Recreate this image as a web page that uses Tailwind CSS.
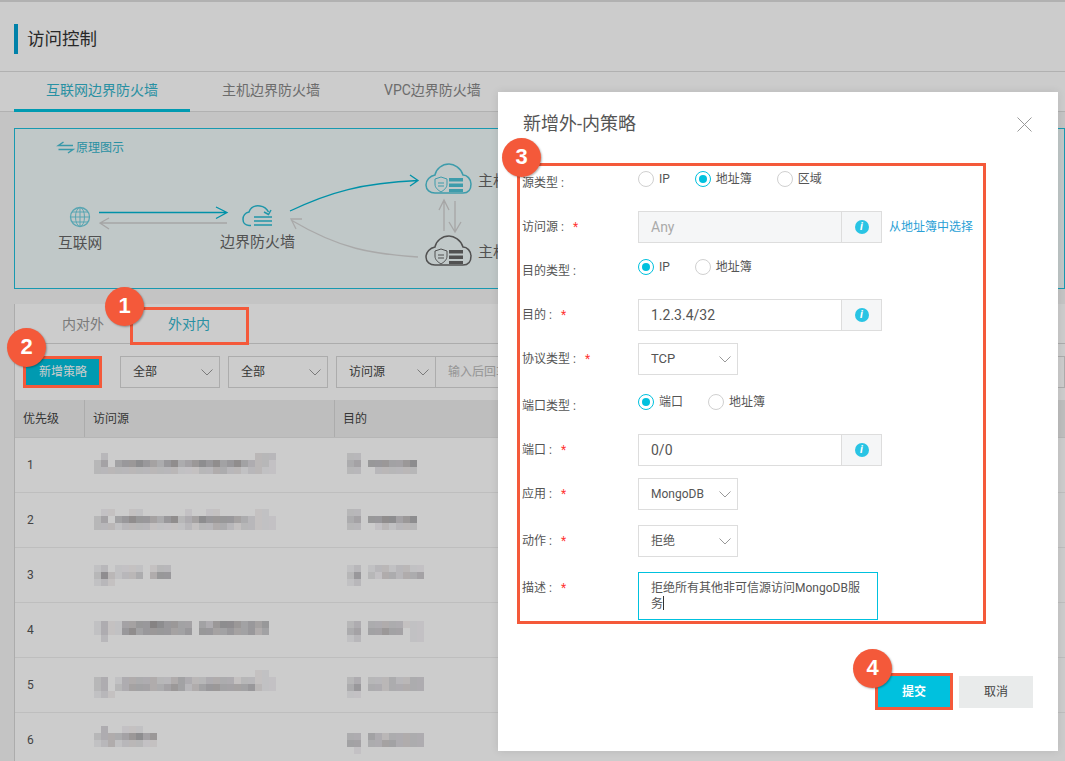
<!DOCTYPE html>
<html lang="zh-CN">
<head>
<meta charset="UTF-8">
<title>访问控制</title>
<script src="https://cdn.jsdelivr.net/npm/@tailwindcss/browser@4"></script>
</head>
<body class="font-['Roboto','Noto_Sans_CJK_SC',sans-serif]">
<div class="relative w-[1065px] h-[761px] overflow-hidden bg-[#f5f5f5]">

  <!-- page under the dialog -->
  <div class="flex flex-col h-full">
    <div class="h-[72px] shrink-0 bg-white border-t-2 border-b border-[#dedede] flex items-start pl-[14px] pt-[22px]">
      <div class="w-[4px] h-[30px] bg-[#00a2d4]"></div>
      <div class="ml-[9px] text-[17.5px] leading-[30px] text-[#333]">访问控制</div>
    </div>
    <div class="h-[40px] shrink-0 bg-white border-b border-[#dedede] pl-[14px] flex text-[14px] text-[#888]">
      <div class="px-8 h-[40px] leading-[36px] text-[#33b5cc] border-b-[3px] border-[#00c1de]">互联网边界防火墙</div>
      <div class="px-8 leading-[36px]">主机边界防火墙</div>
      <div class="px-8 leading-[36px]">VPC边界防火墙</div>
    </div>

    <!-- diagram banner -->
    <div class="relative ml-[14px] mt-[16px] h-[161px] shrink-0 border border-[#1fc0dc] bg-[#f0fafa]">
      <svg class="absolute left-0 top-0" width="520" height="159" viewBox="15 129 520 159" fill="none">
        <path d="M73 145.500H58.500L63.500 142M58.500 149.500H73L68 153" stroke="#47bfd4" stroke-width="1.5"/>
        <circle cx="80" cy="217" r="9.5" stroke="#6fcfdf" stroke-width="1.3"/>
        <ellipse cx="80" cy="217" rx="4.5" ry="9.5" stroke="#6fcfdf"/>
        <path d="M70.500 217h19M72 212h16M72 222h16M80 207.500v19" stroke="#6fcfdf"/>
        <path d="M99 212.500H227M216 207l11 5.500-11 6" stroke="#00b6d2" stroke-width="1.300"/>
        <path d="M227 223H100M109 218l-9 5 9 6" stroke="#cfcfcf" stroke-width="1.300"/>
        <path d="M251 225.500h-2c-8 0-8-12-0-13.500 2-6 7-6.500 11-6 4 .5 7 3 8.500 6M264 212l4.500 2.500 2.500-4.500" stroke="#28bcd4" stroke-width="1.500"/>
        <path d="M254 217h18M254 221h18M254 225h18" stroke="#28bcd4" stroke-width="1.700"/>
        <path d="M290 211C330 192 362 183 418 180.500M410 175l8 5.500-8 5.500" stroke="#00b6d2" stroke-width="1.300"/>
        <path d="M418 257C372 254 340 249 291 220M302 219l-11 0 5 10" stroke="#d4d4d4" stroke-width="1.300"/>
        <path d="M435 193H463C470 193 471 187 471 184C471 179 467 175 463 175C461 168 454 164 449 164C442 164 436 169 435 175C430 176 426 180 426 185C426 190 430 193 435 193Z" stroke="#4dc3d6" stroke-width="1.500"/>
        <path d="M441 177l6 2v5c0 4-3 6-6 8-3-2-6-4-6-8v-5zM438 183h6M438 186h6" stroke="#4dc3d6"/>
        <path d="M449 178h14v3.500h-14zM449 183.500h14v3.500h-14zM449 189h14v3h-14z" fill="#4dc3d6"/>
        <path d="M435 265H463C470 265 471 259 471 256C471 251 467 247 463 247C461 240 454 236 449 236C442 236 436 241 435 247C430 248 426 252 426 257C426 262 430 265 435 265Z" stroke="#666" stroke-width="1.500"/>
        <path d="M441 249l6 2v5c0 4-3 6-6 8-3-2-6-4-6-8v-5zM438 255h6M438 258h6" stroke="#666"/>
        <path d="M449 250h14v3.500h-14zM449 255.500h14v3.500h-14zM449 261h14v3h-14z" fill="#666"/>
        <path d="M444 231V200M439 210l5-10 5 10M455 201v31M449 222l6 10 6-10" stroke="#d0d0d0" stroke-width="1.300"/>
      </svg>
      <div class="absolute left-[61px] top-[11px] text-[12px] leading-[16px] text-[#33b5cc]">原理图示</div>
      <div class="absolute left-[43px] top-[104px] text-[14.700px] leading-[20px] text-[#666]">互联网</div>
      <div class="absolute left-[205px] top-[103px] text-[15px] leading-[20px] text-[#666]">边界防火墙</div>
      <div class="absolute left-[463px] top-[42px] text-[15px] leading-[20px] text-[#666]">主机</div>
      <div class="absolute left-[463px] top-[113px] text-[15px] leading-[20px] text-[#666]">主机</div>
    </div>

    <!-- rules table -->
    <div class="ml-[14px] mt-[15px] flex-1 bg-white border-l border-[#d8d8d8]">
      <div class="h-[40px] pl-[15px] flex border-b border-[#d8d8d8] text-[14px] text-[#999]">
        <div class="w-[106px] text-center leading-[40px]">内对外</div>
        <div class="w-[106px] h-[40px] text-center leading-[40px] text-[#33b5cc] border-b-2 border-[#00c1de]">外对内</div>
      </div>
      <div class="mt-[12px] h-[32px] pl-[11px] flex items-center text-[12px] text-[#444]">
        <div class="w-[74px] h-[28px] bg-[#00c1de] text-white text-center leading-[28px]">新增策略</div>
        <div class="ml-[20px] w-[100px] h-[32px] border border-[#d8d8d8] pl-[12px] pr-[6px] flex items-center justify-between">全部
          <svg width="12" height="7" viewBox="0 0 12 7" fill="none"><path d="M.5.500 6 6l5.500-5.500" stroke="#999"/></svg>
        </div>
        <div class="ml-[8px] w-[100px] h-[32px] border border-[#d8d8d8] pl-[12px] pr-[6px] flex items-center justify-between">全部
          <svg width="12" height="7" viewBox="0 0 12 7" fill="none"><path d="M.5.500 6 6l5.500-5.500" stroke="#999"/></svg>
        </div>
        <div class="ml-[8px] w-[100px] h-[32px] border border-[#d8d8d8] pl-[12px] pr-[6px] flex items-center justify-between">访问源
          <svg width="12" height="7" viewBox="0 0 12 7" fill="none"><path d="M.5.500 6 6l5.500-5.500" stroke="#999"/></svg>
        </div>
        <div class="flex-1 h-[32px] border border-l-0 border-[#d8d8d8] pl-[12px] leading-[30px] text-[#bbb]">输入后回车</div>
      </div>
      <div class="mt-[12px] h-[38px] flex bg-[#eeeeee] text-[12px] leading-[38px] text-[#444] border-b border-[#e4e4e4]">
        <div class="w-[70px] pl-[8px] border-r border-[#d8d8d8]">优先级</div>
        <div class="w-[250px] pl-[8px] border-r border-[#d8d8d8]">访问源</div>
        <div class="flex-1 pl-[8px]">目的</div>
      </div>
      <div class="h-[55px] flex text-[12px] text-[#555] border-b border-[#eee]"><div class="w-[70px] pl-[12px] leading-[54px]">1</div><svg data-blur="0" class="w-[250px] h-[54px]"></svg><svg data-blur="1" class="w-[200px] h-[54px]"></svg></div>
      <div class="h-[55px] flex text-[12px] text-[#555] border-b border-[#eee]"><div class="w-[70px] pl-[12px] leading-[54px]">2</div><svg data-blur="2" class="w-[250px] h-[54px]"></svg><svg data-blur="3" class="w-[200px] h-[54px]"></svg></div>
      <div class="h-[55px] flex text-[12px] text-[#555] border-b border-[#eee]"><div class="w-[70px] pl-[12px] leading-[54px]">3</div><svg data-blur="4" class="w-[250px] h-[54px]"></svg><svg data-blur="5" class="w-[200px] h-[54px]"></svg></div>
      <div class="h-[55px] flex text-[12px] text-[#555] border-b border-[#eee]"><div class="w-[70px] pl-[12px] leading-[54px]">4</div><svg data-blur="6" class="w-[250px] h-[54px]"></svg><svg data-blur="7" class="w-[200px] h-[54px]"></svg></div>
      <div class="h-[55px] flex text-[12px] text-[#555] border-b border-[#eee]"><div class="w-[70px] pl-[12px] leading-[54px]">5</div><svg data-blur="8" class="w-[250px] h-[54px]"></svg><svg data-blur="9" class="w-[200px] h-[54px]"></svg></div>
      <div class="h-[55px] flex text-[12px] text-[#555] border-b border-[#eee]"><div class="w-[70px] pl-[12px] leading-[54px]">6</div><svg data-blur="10" class="w-[250px] h-[54px]"></svg><svg data-blur="11" class="w-[200px] h-[54px]"></svg></div>
    </div>
  </div>

  <div class="absolute inset-0 bg-black/20"></div>

  <!-- dialog -->
  <div class="absolute left-[498px] top-[92px] w-[560px] h-[659px] bg-white shadow-[0_0_8px_rgba(0,0,0,0.1)] pl-[24px] pr-[25px]">
    <div class="h-[71px] flex items-start justify-between pt-[21px]">
      <div class="ml-[1px] text-[18px] leading-[22px] text-[#555]">新增外-内策略</div>
      <svg class="mt-[4px] mr-[1px]" width="15" height="15" viewBox="0 0 15 15" fill="none"><path d="M.5.500l14 14M14.500.500l-14 14" stroke="#999"/></svg>
    </div>

    <div class="text-[12px] text-[#555]">
      <div class="h-[32px] flex items-center">
        <div class="w-[116px] pt-[8px]">源类型&nbsp;:</div>
        <div class="flex items-center gap-[25px]">
          <div class="flex items-center gap-[5px]"><span class="w-[16px] h-[16px] rounded-full border border-[#d0d0d0]"></span>IP</div>
          <div class="flex items-center gap-[5px]"><span class="w-[16px] h-[16px] rounded-full border border-[#00c1de] flex items-center justify-center"><span class="w-[8px] h-[8px] rounded-full bg-[#00c1de]"></span></span>地址簿</div>
          <div class="flex items-center gap-[5px]"><span class="w-[16px] h-[16px] rounded-full border border-[#d0d0d0]"></span>区域</div>
        </div>
      </div>
      <div class="mt-[16px] h-[32px] flex items-center">
        <div class="w-[116px]">访问源&nbsp;:<span class="ml-[9px] text-[#f33]">*</span></div>
        <div class="w-[204px] h-[32px] border border-[#ddd] bg-[#f5f6f7] pl-[12px] text-[14px] leading-[30px] text-[#aaa]">Any</div>
        <div class="w-[40px] h-[32px] border border-l-0 border-[#ddd] bg-[#f5f6f7] flex items-center justify-center"><span class="w-[14px] h-[14px] rounded-full bg-[#29c4e4] text-white text-[11px] leading-[14px] font-bold italic text-center">i</span></div>
        <div class="ml-[7px] text-[#2a9fd6]">从地址簿中选择</div>
      </div>
      <div class="mt-[8px] h-[32px] flex items-center">
        <div class="w-[116px] pt-[8px]">目的类型&nbsp;:</div>
        <div class="flex items-center gap-[25px]">
          <div class="flex items-center gap-[5px]"><span class="w-[16px] h-[16px] rounded-full border border-[#00c1de] flex items-center justify-center"><span class="w-[8px] h-[8px] rounded-full bg-[#00c1de]"></span></span>IP</div>
          <div class="flex items-center gap-[5px]"><span class="w-[16px] h-[16px] rounded-full border border-[#d0d0d0]"></span>地址簿</div>
        </div>
      </div>
      <div class="mt-[16px] h-[32px] flex items-center">
        <div class="w-[116px]">目的&nbsp;:<span class="ml-[9px] text-[#f33]">*</span></div>
        <div class="w-[204px] h-[32px] border border-[#ddd] pl-[12px] text-[14px] leading-[30px]">1.2.3.4/32</div>
        <div class="w-[40px] h-[32px] border border-l-0 border-[#ddd] bg-[#f5f6f7] flex items-center justify-center"><span class="w-[14px] h-[14px] rounded-full bg-[#29c4e4] text-white text-[11px] leading-[14px] font-bold italic text-center">i</span></div>
      </div>
      <div class="mt-[12px] h-[32px] flex items-center">
        <div class="w-[116px]">协议类型&nbsp;:<span class="ml-[9px] text-[#f33]">*</span></div>
        <div class="w-[100px] h-[32px] border border-[#ddd] pl-[12px] pr-[6px] flex items-center justify-between text-[13px]">TCP
          <svg width="12" height="7" viewBox="0 0 12 7" fill="none"><path d="M.5.500 6 6l5.500-5.500" stroke="#999"/></svg>
        </div>
      </div>
      <div class="mt-[11px] h-[32px] flex items-center">
        <div class="w-[116px] pt-[8px]">端口类型&nbsp;:</div>
        <div class="flex items-center gap-[25px]">
          <div class="flex items-center gap-[5px]"><span class="w-[16px] h-[16px] rounded-full border border-[#00c1de] flex items-center justify-center"><span class="w-[8px] h-[8px] rounded-full bg-[#00c1de]"></span></span>端口</div>
          <div class="flex items-center gap-[5px]"><span class="w-[16px] h-[16px] rounded-full border border-[#d0d0d0]"></span>地址簿</div>
        </div>
      </div>
      <div class="mt-[16px] h-[32px] flex items-center">
        <div class="w-[116px]">端口&nbsp;:<span class="ml-[9px] text-[#f33]">*</span></div>
        <div class="w-[204px] h-[32px] border border-[#ddd] pl-[12px] text-[14px] leading-[30px]">0/0</div>
        <div class="w-[40px] h-[32px] border border-l-0 border-[#ddd] bg-[#f5f6f7] flex items-center justify-center"><span class="w-[14px] h-[14px] rounded-full bg-[#29c4e4] text-white text-[11px] leading-[14px] font-bold italic text-center">i</span></div>
      </div>
      <div class="mt-[12px] h-[32px] flex items-center">
        <div class="w-[116px]">应用&nbsp;:<span class="ml-[9px] text-[#f33]">*</span></div>
        <div class="w-[100px] h-[32px] border border-[#ddd] pl-[12px] pr-[6px] flex items-center justify-between">MongoDB
          <svg width="12" height="7" viewBox="0 0 12 7" fill="none"><path d="M.5.500 6 6l5.500-5.500" stroke="#999"/></svg>
        </div>
      </div>
      <div class="mt-[15px] h-[32px] flex items-center">
        <div class="w-[116px]">动作&nbsp;:<span class="ml-[9px] text-[#f33]">*</span></div>
        <div class="w-[100px] h-[32px] border border-[#ddd] pl-[12px] pr-[6px] flex items-center justify-between">拒绝
          <svg width="12" height="7" viewBox="0 0 12 7" fill="none"><path d="M.5.500 6 6l5.500-5.500" stroke="#999"/></svg>
        </div>
      </div>
      <div class="mt-[15px] h-[48px] flex items-start">
        <div class="w-[116px] pt-[8px] leading-[16px]">描述&nbsp;:<span class="ml-[9px] text-[#f33]">*</span></div>
        <div class="w-[240px] h-[48px] border border-[#00c1de] pl-[12px] pt-[7px] leading-[16px]">拒绝所有其他非可信源访问MongoDB服<br>务<span class="inline-block w-px h-[14px] bg-[#333] align-[-2px]"></span></div>
      </div>
    </div>

    <div class="mt-[56px] flex justify-end gap-[8px] text-[12px]">
      <div class="w-[74px] h-[32px] bg-[#00c1de] text-white font-bold text-center leading-[32px]">提交</div>
      <div class="w-[74px] h-[32px] bg-[#e9ebeb] text-[#444] text-center leading-[32px]">取消</div>
    </div>
  </div>

  <!-- red step marks -->
  <div class="absolute left-[130px] top-[307px] w-[119px] h-[38px] border-[3px] border-[#f4593a]"></div>
  <div class="absolute left-[23px] top-[356px] w-[79px] h-[32px] border-[3px] border-[#f4593a]"></div>
  <div class="absolute left-[517px] top-[163px] w-[469px] h-[461px] border-[3px] border-[#f4593a]"></div>
  <div class="absolute left-[875px] top-[673px] w-[78px] h-[37px] border-[3px] border-[#f4593a]"></div>
  <div class="absolute left-[105px] top-[287px] w-[39px] h-[39px] rounded-full bg-[#f4593a] shadow-[1px_1px_2px_rgba(0,0,0,0.3)] text-white text-center font-['Liberation_Sans',sans-serif] font-bold text-[22px] leading-[38px]">1</div>
  <div class="absolute left-[7px] top-[328px] w-[39px] h-[39px] rounded-full bg-[#f4593a] shadow-[1px_1px_2px_rgba(0,0,0,0.3)] text-white text-center font-['Liberation_Sans',sans-serif] font-bold text-[22px] leading-[38px]">2</div>
  <div class="absolute left-[502px] top-[138px] w-[39px] h-[39px] rounded-full bg-[#f4593a] shadow-[1px_1px_2px_rgba(0,0,0,0.3)] text-white text-center font-['Liberation_Sans',sans-serif] font-bold text-[22px] leading-[38px]">3</div>
  <div class="absolute left-[853px] top-[649px] w-[39px] h-[39px] rounded-full bg-[#f4593a] shadow-[1px_1px_2px_rgba(0,0,0,0.3)] text-white text-center font-['Liberation_Sans',sans-serif] font-bold text-[22px] leading-[38px]">4</div>
</div>

<script>
  // redacted cells: one string per row of 7px blocks, digit = darkness
  var blurs = [
    [9, 15, ["02000000000000000000000222", "24045565435634565645643221", "22222222222211122332212211"]],
    [12, 15, ["2200000000", "3405554456", "2200222222"]],
    [9, 16, ["01100110000001001100000110", "24045655435623465555432111", "22212222111112122332122111"]],
    [12, 16, ["2200000000", "3405566456", "2200121222"]],
    [9, 17, ["12011110122", "26212230355", "12100000000"]],
    [12, 17, ["12012212211", "25021332334", "12000000000"]],
    [9, 18, ["1311445576554404356654545", "1311564555544505544544534", "0200000000000000000000000"]],
    [12, 18, ["23033333111", "34044544011", "12000000011"]],
    [9, 12, ["00000000000000000000000110", "23013333322343223333122111", "23023444334542345544445211", "12100000000000000000000000"]],
    [12, 12, ["00000000000", "23022232233", "35033233333", "11000000000"]],
    [9, 13, ["030011100", "233345645", "123122211"]],
    [12, 20, ["33043233333", "44033443333", "01000000000"]]
  ];
  document.querySelectorAll("svg[data-blur]").forEach(function (svg) {
    var b = blurs[svg.getAttribute("data-blur")];
    b[2].forEach(function (line, r) {
      for (var c = 0; c < line.length; c++) {
        var d = +line[c];
        if (!d) continue;
        var g = 255 - d * 13;
        var rect = document.createElementNS("http://www.w3.org/2000/svg", "rect");
        rect.setAttribute("x", b[0] + c * 7);
        rect.setAttribute("y", b[1] + r * 7);
        rect.setAttribute("width", 7);
        rect.setAttribute("height", 7);
        rect.setAttribute("fill", "rgb(" + (g + c % 3 * 2) + "," + g + "," + (g + (c + 1) % 3 * 2) + ")");
        svg.appendChild(rect);
      }
    });
  });
</script>
</body>
</html>
